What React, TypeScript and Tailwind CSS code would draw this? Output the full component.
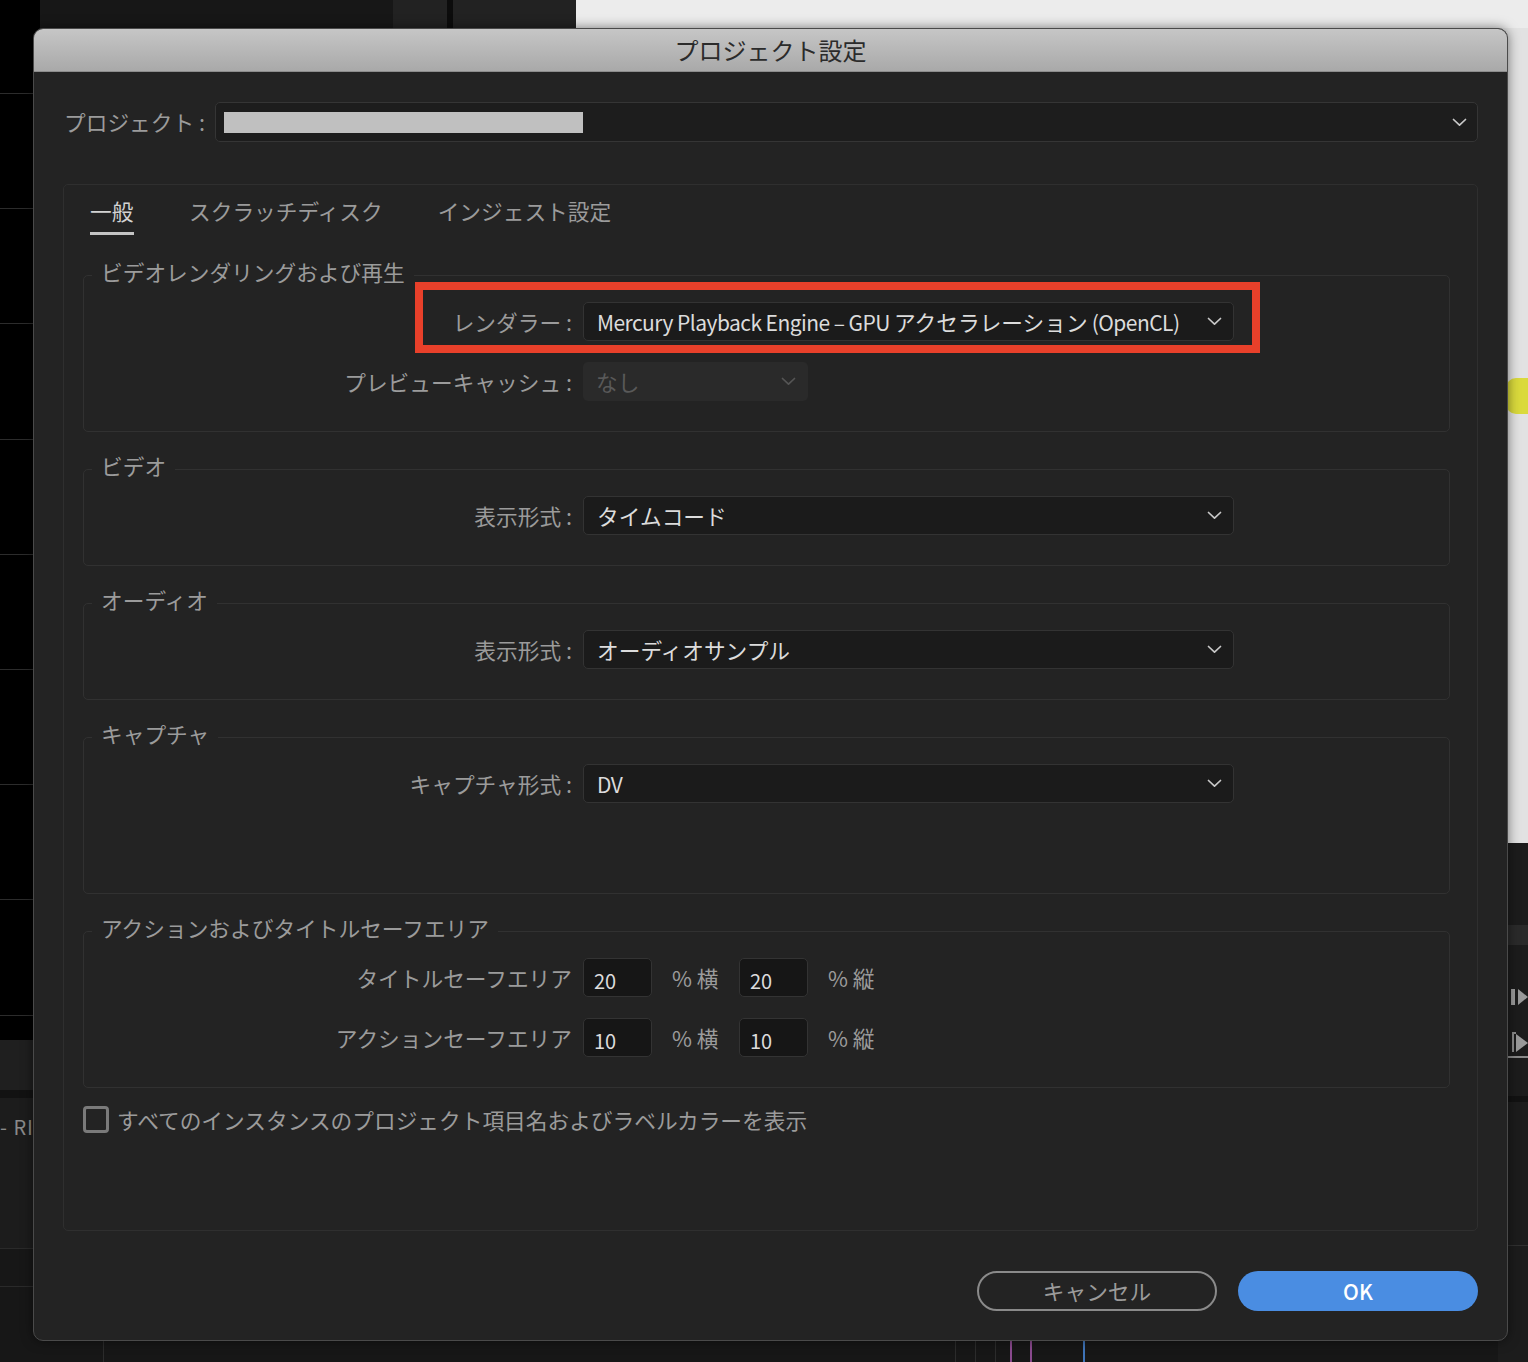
import type { ReactNode } from 'react'

const FONT = "font-['Noto_Sans_CJK_JP','Noto_Sans',sans-serif]"

function Chevron({ color = '#c8c8c8' }: { color?: string }) {
  return (
    <svg width="15" height="9" viewBox="0 0 15 9" fill="none">
      <path d="M1.5 1.5 L7.5 7.2 L13.5 1.5" stroke={color} strokeWidth="1.7" strokeLinecap="round" strokeLinejoin="round" />
    </svg>
  )
}

function Select({ children, width = 'w-[651px]' }: { children: ReactNode; width?: string }) {
  return (
    <div
      className={`${width} flex h-[39px] items-center justify-between rounded-[5px] border border-[#333333] bg-[#1b1b1b] pl-[13px] pr-[11px]`}
    >
      <span className="text-[21.7px] leading-none text-[#dcdcdc]">{children}</span>
      <Chevron />
    </div>
  )
}

function Row({ label, children }: { label: string; children: ReactNode }) {
  return (
    <div className="flex items-center">
      <span className="w-[490px] pr-[2px] text-right text-[21.7px] leading-none text-[#9b9b9b]">{label}</span>
      <div className="ml-[9px] flex items-center">{children}</div>
    </div>
  )
}

function Group({ title, className, children }: { title: string; className: string; children: ReactNode }) {
  return (
    <div className={`relative rounded-[5px] border border-[#313131] ${className}`}>
      <span className="absolute -top-[18px] left-[8px] bg-[#232323] px-[9px] text-[21.7px] leading-[28px] text-[#9b9b9b]">
        {title}
      </span>
      {children}
    </div>
  )
}

function NumBox({ value }: { value: string }) {
  return (
    <div className="flex h-[39px] w-[69px] items-center rounded-[5px] border border-[#333333] bg-[#161616] pl-[10px] pt-[6px] text-[20px] leading-none text-[#dcdcdc]">
      {value}
    </div>
  )
}

function SafeRow({ label, value }: { label: string; value: string }) {
  return (
    <div className="flex items-center">
      <span className="w-[490px] pr-[2px] text-right text-[21.7px] leading-none text-[#9b9b9b]">{label}</span>
      <div className="ml-[9px] flex items-center">
        <NumBox value={value} />
        <span className="ml-[20px] w-[67px] text-[21.7px] leading-none text-[#9b9b9b]">% 横</span>
        <NumBox value={value} />
        <span className="ml-[20px] text-[21.7px] leading-none text-[#9b9b9b]">% 縦</span>
      </div>
    </div>
  )
}

function Backdrop() {
  const lines = [93, 208, 323, 439, 554, 669, 784, 899, 1015]
  return (
    <>
      {/* left strip */}
      <div className="absolute left-0 top-0 h-[1040px] w-[40px] bg-black">
        {lines.map((y) => (
          <div key={y} className="absolute left-0 h-px w-full bg-[#2c2c2c]" style={{ top: y }} />
        ))}
      </div>
      <div className="absolute left-0 top-[1040px] h-[50px] w-[40px] bg-[#1f1f1f]" />
      <div className="absolute left-0 top-[1090px] h-[8px] w-[40px] bg-[#121212]" />
      <div className="absolute left-0 top-[1098px] h-[150px] w-[40px] bg-[#1c1c1c]">
        <span className="absolute left-0 top-[19px] whitespace-nowrap text-[20px] leading-none tracking-[1px] text-[#8a8a8a]">
          - RI(
        </span>
      </div>
      <div className="absolute left-0 top-[1248px] h-px w-[40px] bg-[#2a2a2a]" />
      <div className="absolute left-0 top-[1286px] h-px w-[40px] bg-[#2a2a2a]" />
      {/* top strip */}
      <div className="absolute left-[393px] top-0 h-[40px] w-[183px] bg-[#222222]" />
      <div className="absolute left-[447px] top-0 h-[40px] w-[6px] bg-[#0c0c0c]" />
      <div className="absolute left-[576px] top-0 h-[40px] w-[952px] bg-[#ececec]" />
      {/* right strip */}
      <div className="absolute right-0 top-[28px] h-[815px] w-[30px] bg-[#e2e2e2]" />
      <div className="absolute right-0 top-[378px] h-[36px] w-[22px] rounded-l-[10px] bg-[#dada3c]" />
      <div className="absolute right-0 top-[843px] h-[519px] w-[30px] bg-[#1c1c1c]" />
      <div className="absolute right-0 top-[925px] h-[20px] w-[20px] bg-[#2a2a2a]" />
      <div className="absolute right-0 top-[988px] flex h-[18px] items-center gap-[3px]">
        <div className="h-[16px] w-[4px] bg-[#9a9a9a]" />
        <svg width="10" height="16" viewBox="0 0 10 16">
          <path d="M0 0 L10 8 L0 16 Z" fill="#9a9a9a" />
        </svg>
      </div>
      <div className="absolute right-0 top-[1032px] flex items-end">
        <div className="h-[20px] w-[4px] border-l-2 border-t-2 border-[#8a8a8a]" />
        <svg width="12" height="18" viewBox="0 0 12 18">
          <path d="M0 0 L12 9 L0 18 Z" fill="#9a9a9a" />
        </svg>
      </div>
      <div className="absolute right-0 top-[1056px] h-[2px] w-[20px] bg-[#8a8a8a]" />
      <div className="absolute right-0 top-[1096px] h-[6px] w-[20px] bg-[#121212]" />
      <div className="absolute right-0 top-[1245px] h-px w-[20px] bg-[#303030]" />
      {/* bottom strip lines */}
      <div className="absolute left-[103px] top-[1341px] h-[21px] w-px bg-[#2c2c2c]" />
      <div className="absolute left-[955px] top-[1341px] h-[21px] w-px bg-[#2c2c2c]" />
      <div className="absolute left-[975px] top-[1341px] h-[21px] w-px bg-[#2c2c2c]" />
      <div className="absolute left-[995px] top-[1341px] h-[21px] w-px bg-[#2c2c2c]" />
      <div className="absolute left-[1010px] top-[1341px] h-[21px] w-[2px] bg-[#8a4a8e]" />
      <div className="absolute left-[1030px] top-[1341px] h-[21px] w-[2px] bg-[#8a4a8e]" />
      <div className="absolute left-[1083px] top-[1341px] h-[21px] w-[2px] bg-[#3f74b8]" />
    </>
  )
}

const LATIN = 'tracking-[-0.55px] text-[21px]'

export default function App() {
  return (
    <div className={`relative h-[1362px] w-[1528px] overflow-hidden bg-[#171717] ${FONT}`}>
      <Backdrop />
      <div className="absolute left-[33px] top-[28px] flex h-[1313px] w-[1475px] flex-col overflow-hidden rounded-[10px] border border-[#4a4a4a] bg-[#232323] shadow-[0_0_12px_rgba(0,0,0,0.5)]">
        {/* title bar */}
        <div className="flex h-[43px] shrink-0 items-center justify-center border-b border-[#8c8c8c] bg-gradient-to-b from-[#c6c6c6] to-[#a9a9a9]">
          <span className="text-[24px] leading-none text-[#2b2b2b]">プロジェクト設定</span>
        </div>

        <div className="flex flex-1 flex-col px-[29px] pt-[30px]">
          {/* project row */}
          <div className="flex items-center">
            <span className="w-[152px] pl-[1px] text-[21.7px] leading-none text-[#9b9b9b]">プロジェクト :</span>
            <div className="flex h-[40px] flex-1 items-center justify-between rounded-[5px] border border-[#353535] bg-[#1d1d1d] pl-[8px] pr-[10px]">
              <div className="h-[21px] w-[359px] bg-[#c0c0c0]" />
              <Chevron />
            </div>
          </div>

          {/* main panel */}
          <div className="mt-[42px] flex h-[1047px] flex-col rounded-[5px] border border-[#2f2f2f] pl-[19px] pr-[27px]">
            <div className="ml-[7px] flex gap-[55px] pt-[12px]">
              <div className="flex flex-col">
                <span className="text-[21.7px] leading-[28px] text-[#d2d2d2]">一般</span>
                <div className="mt-[7px] h-[3px] w-[44px] bg-[#c4c4c4]" />
              </div>
              <span className="text-[21.7px] leading-[28px] text-[#9b9b9b]">スクラッチディスク</span>
              <span className="text-[21.7px] leading-[28px] text-[#9b9b9b]">インジェスト設定</span>
            </div>

            <Group title="ビデオレンダリングおよび再生" className="mt-[40px] pb-[30px] pt-[26px]">
              <div className="flex flex-col gap-[21px]">
                <Row label="レンダラー :">
                  <Select>
                    <span className={LATIN}>Mercury Playback Engine – GPU </span>
                    アクセラレーション
                    <span className={LATIN}> (OpenCL)</span>
                  </Select>
                </Row>
                <Row label="プレビューキャッシュ :">
                  <div className="flex h-[39px] w-[225px] items-center justify-between rounded-[5px] bg-[#2a2a2a] pl-[13px] pr-[12px]">
                    <span className="text-[21.7px] leading-none text-[#595959]">なし</span>
                    <Chevron color="#555555" />
                  </div>
                </Row>
              </div>
              {/* highlight annotation */}
              <div className="pointer-events-none absolute left-[331px] top-[6px] h-[71px] w-[845px] border-[8px] border-[#e8402a]" />
            </Group>

            <Group title="ビデオ" className="mt-[37px] pb-[30px] pt-[26px]">
              <Row label="表示形式 :">
                <Select>タイムコード</Select>
              </Row>
            </Group>

            <Group title="オーディオ" className="mt-[37px] pb-[30px] pt-[26px]">
              <Row label="表示形式 :">
                <Select>オーディオサンプル</Select>
              </Row>
            </Group>

            <Group title="キャプチャ" className="mt-[37px] pb-[90px] pt-[26px]">
              <Row label="キャプチャ形式 :">
                <Select>
                  <span className={LATIN}>DV</span>
                </Select>
              </Row>
            </Group>

            <Group title="アクションおよびタイトルセーフエリア" className="mt-[37px] pb-[30px] pt-[26px]">
              <div className="flex flex-col gap-[21px]">
                <SafeRow label="タイトルセーフエリア" value="20" />
                <SafeRow label="アクションセーフエリア" value="10" />
              </div>
            </Group>

            <label className="mt-[18px] flex items-center gap-[8px]">
              <span className="h-[27px] w-[26px] rounded-[4px] border-[3px] border-[#7a7a7a]" />
              <span className="text-[21.7px] leading-none text-[#9b9b9b]">
                すべてのインスタンスのプロジェクト項目名およびラベルカラーを表示
              </span>
            </label>
          </div>

          {/* buttons */}
          <div className="mt-[40px] flex justify-end gap-[21px]">
            <button className="flex h-[40px] w-[240px] items-center justify-center rounded-full border-[2.5px] border-[#8a8a8a] text-[21.7px] leading-none text-[#9b9b9b]">
              キャンセル
            </button>
            <button className="flex h-[40px] w-[240px] items-center justify-center rounded-full bg-[#4a8de2] text-[21px] font-medium leading-none text-white">
              OK
            </button>
          </div>
        </div>
      </div>
    </div>
  )
}
